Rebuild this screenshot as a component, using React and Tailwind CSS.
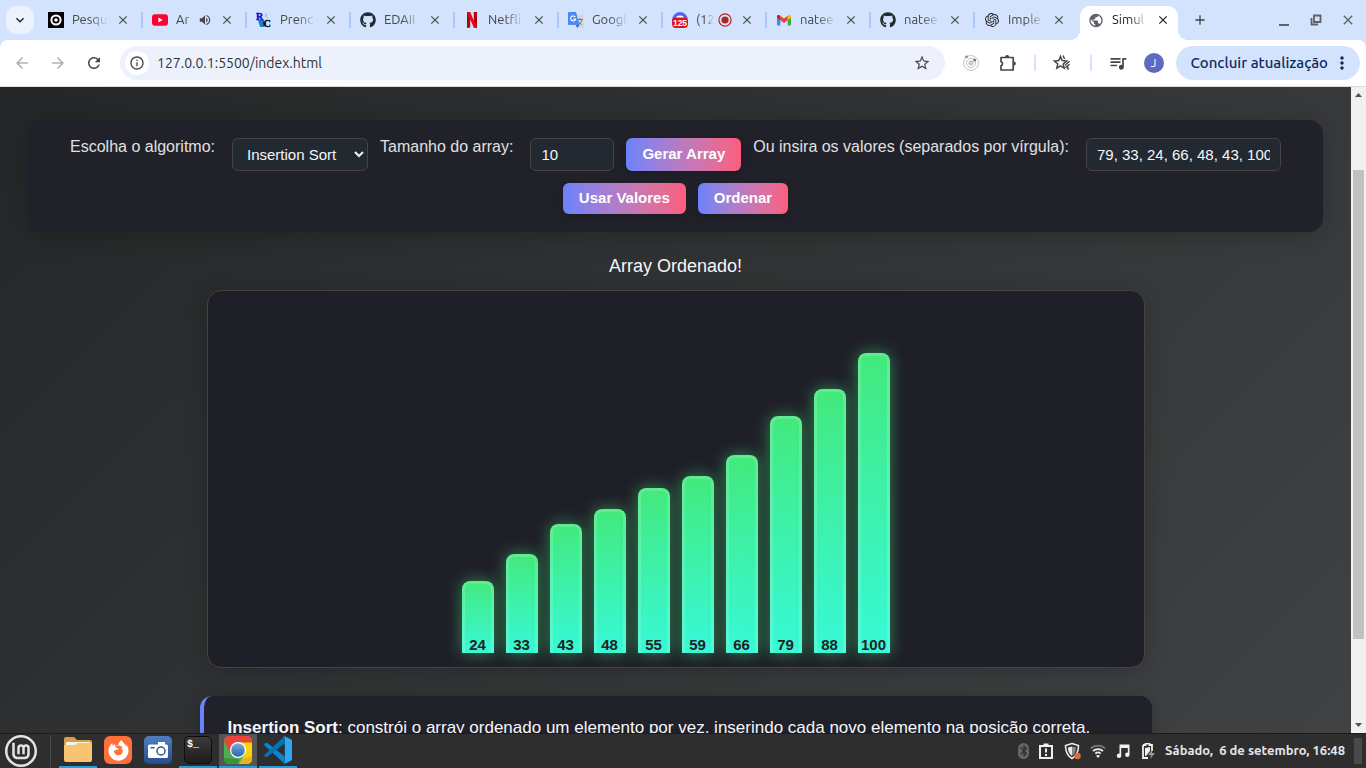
import { FaGithub, FaFirefoxBrowser } from "react-icons/fa";
import { SiLinuxmint, SiOpenai } from "react-icons/si";
import {
  MdArrowBack,
  MdArrowForward,
  MdBluetooth,
  MdClose,
  MdExpandMore,
  MdAdd,
  MdMoreVert,
  MdOutlineInfo,
  MdPublic,
  MdQueueMusic,
  MdRefresh,
  MdStarBorder,
  MdVolumeUp,
} from "react-icons/md";

/* ---------- favicons ---------- */

const SearchRing = () => (
  <svg viewBox="0 0 16 16" className="size-4">
    <rect width="16" height="16" fill="#000" />
    <circle cx="8" cy="8" r="4.6" fill="none" stroke="#fff" strokeWidth="2" />
    <circle cx="8" cy="8" r="1.8" fill="#fff" />
  </svg>
);

const YouTube = () => (
  <svg viewBox="0 0 16 16" className="size-4">
    <rect y="2.3" width="16" height="11.4" rx="3" fill="#ff0033" />
    <path d="M6.4 5.6v4.8L10.6 8z" fill="#fff" />
  </svg>
);

const LetterPair = () => (
  <svg viewBox="0 0 16 16" className="size-4">
    <path d="M2 8h6v7H4z" fill="#1b7fd0" />
    <path d="M9 1l3 2-2 1 3 3-4-2z" fill="#b9bcc4" />
    <path d="M7 9l3 3-2 3z" fill="#0d2c66" />
    <text x="0" y="7.5" fontSize="10" fontWeight="900" fill="#1010d8" stroke="#1010d8" strokeWidth=".5" fontFamily="Liberation Serif, serif">R</text>
    <text x="7.5" y="15" fontSize="10" fontWeight="900" fill="#111" stroke="#111" strokeWidth=".5" fontFamily="Liberation Serif, serif">C</text>
  </svg>
);

const Netflix = () => (
  <svg viewBox="0 0 16 16" className="size-4">
    <path d="M3 0h3.2v15.6L3 16zM9.8 0H13v16l-3.2-.4z" fill="#b1060f" />
    <path d="M3 0h3.2L13 16l-3.3-.4z" fill="#e50914" />
  </svg>
);

const Translate = () => (
  <svg viewBox="0 0 16 16" className="size-4">
    <path d="M6 3h9a1 1 0 0 1 1 1v11a1 1 0 0 1-1 1H9z" fill="#d5d8dc" />
    <path d="M9 7.5h6M12 6v1.5M14 7.5c-.5 2.4-2 4-4 5M10.5 9.5c.8 1.4 2 2.5 3.6 3" stroke="#6b7c8c" strokeWidth="1" fill="none" />
    <path d="M1 0h7l3.6 13H1a1 1 0 0 1-1-1V1a1 1 0 0 1 1-1z" fill="#4a8af4" />
    <path d="M8 13h3.6L9 16z" fill="#2f5fc4" />
    <path d="M7.3 5.1A2.5 2.5 0 1 0 7.6 7H5.3" stroke="#fff" strokeWidth="1.1" fill="none" />
  </svg>
);

const DiscordBadge = () => (
  <svg viewBox="0 0 16 16" className="size-4">
    <circle cx="8" cy="8" r="7.9" fill="#5865f2" />
    <path d="M4 6c0-1.500 1.500-2.500 4-2.500s4 1 4 2.500z" fill="#fff" />
    <rect y="5.600" width="16" height="10.400" rx="4" fill="#e01020" />
    <text x="8" y="14" textAnchor="middle" fontSize="8.500" fontWeight="700" fill="#fff" fontFamily="Liberation Sans, sans-serif">125</text>
  </svg>
);

const Gmail = () => (
  <svg viewBox="0 0 16 16" className="size-4">
    <path d="M1 4v8.500a1 1 0 0 0 1 1h2.300V6.500z" fill="#4285f4" />
    <path d="M15 4v8.500a1 1 0 0 1-1 1h-2.300V6.500z" fill="#34a853" />
    <path d="M11.700 4v4.200L15 5.700V4.300c0-1.600-1.500-2-2.500-1z" fill="#fbbc04" />
    <path d="M4.300 8.200V3.800L8 6.600l3.700-2.800v4.400L8 11z" fill="#ea4335" />
    <path d="M1 4.300v1.400l3.300 2.500V3.800l-.8-.6C2.500 2.500 1 3 1 4.300z" fill="#c5221f" />
  </svg>
);

const RecordDot = () => (
  <svg viewBox="0 0 14 14" className="size-3.5 shrink-0">
    <circle cx="7" cy="7" r="6.100" fill="none" stroke="#b3261e" strokeWidth="1.200" />
    <circle cx="7" cy="7" r="3.600" fill="#b3261e" />
  </svg>
);

/* ---------- toolbar icons ---------- */

const Orbit = () => (
  <svg viewBox="0 0 18 18" className="size-[18px]" fill="none" stroke="#c4c4c4">
    <circle cx="9" cy="9" r="7.500" />
    <circle cx="9" cy="9" r="4.600" />
    <circle cx="9" cy="9" r="2.200" fill="#d0d0d0" />
    <circle cx="4.500" cy="2.800" r="1.400" fill="#8a8a8a" stroke="none" />
    <circle cx="12.600" cy="6" r="1.500" fill="#777" stroke="none" />
  </svg>
);

const Puzzle = () => (
  <svg viewBox="0 0 20 20" className="size-5">
    <path
      d="M3 4.500h12.200V17H3v-4.200a2.200 2.200 0 0 0 0-4.200z"
      fill="none"
      stroke="#474747"
      strokeWidth="1.700"
      strokeLinejoin="round"
    />
    <path d="M7 4a2.100 2.100 0 0 1 4.200 0zM15.800 8.500a2.100 2.100 0 0 1 0 4.200z" fill="#474747" />
  </svg>
);

const StarTrail = () => (
  <svg viewBox="0 0 20 20" className="size-5" fill="none" stroke="#474747" strokeWidth="1.500">
    <path d="M8.500 3.500l1.700 4.100 4.400.4-3.400 2.900 1 4.300-3.700-2.300-3.700 2.300 1-4.300L2.400 8l4.400-.4z" />
    <path d="M11 2.500l1.600 3.500M13 12.200l4.500-3.900M13.400 14.800l4.100-3.600M15.300 13.200l1.100 3.600" />
  </svg>
);

/* ---------- desktop icons ---------- */

const Folder = () => (
  <svg viewBox="0 0 28 28" className="size-7">
    <path d="M0 3q0-2 2-2h8l3 3h13q2 0 2 2v6H0z" fill="#d99f43" />
    <rect x="2" y="6" width="24" height="6" fill="#f4f1ea" />
    <path d="M0 9h11l3-2h14v17q0 2-2 2H2q-2 0-2-2z" fill="#f8c471" />
  </svg>
);

const Firefox = () => (
  <span className="flex size-7 items-center justify-center rounded-md bg-[#ff7139]">
    <FaFirefoxBrowser className="size-[21px] text-white" />
  </span>
);

const Camera = () => (
  <svg viewBox="0 0 28 28" className="size-7">
    <defs>
      <linearGradient id="cam" x2="0" y2="1">
        <stop stopColor="#4f7fc0" />
        <stop offset="1" stopColor="#254c8c" />
      </linearGradient>
    </defs>
    <rect width="28" height="28" rx="5" fill="url(#cam)" />
    <path d="M14 6h7v3h-7z" fill="#fff" />
    <rect x="4" y="8.500" width="20" height="13.500" rx="1.500" fill="#fff" />
    <circle cx="17" cy="15" r="4" fill="#fff" stroke="#2f5797" strokeWidth="1.500" />
    <rect x="6.500" y="11" width="4" height="1.500" fill="#2f5797" />
  </svg>
);

const Terminal = () => (
  <svg viewBox="0 0 28 28" className="size-7">
    <defs>
      <linearGradient id="term" x2="0" y2="1">
        <stop stopColor="#3b3b3b" />
        <stop offset="1" stopColor="#1c1c1c" />
      </linearGradient>
    </defs>
    <rect x=".5" y=".5" width="27" height="27" rx="5" fill="url(#term)" stroke="#0c0c0c" />
    <text x="3" y="10.500" fontSize="10" fontWeight="700" fill="#fff" fontFamily="Liberation Mono, monospace">$_</text>
  </svg>
);

const Chrome = () => (
  <svg viewBox="0 0 28 28" className="size-7">
    <defs>
      <clipPath id="sq">
        <rect width="28" height="28" rx="5" />
      </clipPath>
      <linearGradient id="eye" x2="0" y2="1">
        <stop stopColor="#7bb0e0" />
        <stop offset="1" stopColor="#2a62a8" />
      </linearGradient>
    </defs>
    <g clipPath="url(#sq)">
      <rect width="28" height="28" fill="#4caf50" />
      <path d="M0 0h28v7H14L7 18 0 5z" fill="#e8453c" />
      <path d="M14 6.500h14V28H15l6-10z" fill="#fdd20a" />
      <path d="M28 20v8H15l3-5z" fill="#e3b51e" />
      <path d="M0 22l15 1-1 5H0z" fill="#3d9142" />
    </g>
    <circle cx="14" cy="14" r="8" fill="#fff" />
    <circle cx="14" cy="14" r="6.800" fill="url(#eye)" />
  </svg>
);

const VsCode = () => (
  <svg viewBox="0 0 28 28" className="size-7">
    <path d="M20.500 20.300L3.200 6.900q-.8-.6-1.500 0L.4 8.100q-.6.600 0 1.200L20.500 27.700z" fill="#0a86d1" />
    <path d="M20.500 7.700L3.200 21.100q-.8.600-1.500 0L.4 19.900q-.6-.6 0-1.200L20.500.3z" fill="#0671b8" />
    <path d="M20.500.3l6 2.700q1.500.6 1.500 2v18q0 1.400-1.500 2l-6 2.700q-.9.300-1.700-.4 1.700.9 2-1V1.700q-.3-1.900-2-1 .8-.7 1.700-.4z" fill="#2ca7f2" />
  </svg>
);

/* ---------- tray icons ---------- */

const Clipboard = () => (
  <svg viewBox="0 0 16 16" className="size-4" fill="none" stroke="#f0f0f0" strokeWidth="2">
    <path d="M2 3h12v12H2z" />
    <path d="M5.500 2h5" strokeWidth="3" />
    <path d="M8 5.500v4M8 11v2" />
  </svg>
);

const Shield = () => (
  <svg viewBox="0 0 18 18" className="size-[18px]">
    <path d="M9 1.500L15.500 3.500c0 6-1.500 10-6.500 13-5-3-6.500-7-6.500-13z" fill="none" stroke="#ececec" strokeWidth="1.600" />
    <path d="M9 4.500v9.500c-3-2-4-5-4-8.500z" fill="#ececec" />
    <path d="M9 4.500v9.500c3-2 4-5 4-8.500z" fill="#888" />
    <circle cx="14.500" cy="14" r="3.300" fill="#e36b35" />
  </svg>
);

const Wifi = () => (
  <svg viewBox="0 0 16 16" className="size-4" fill="none" strokeWidth="1.700">
    <path d="M.8 5.600a10.300 10.300 0 0 1 14.400 0" stroke="#777" />
    <path d="M3 8.200a7.200 7.200 0 0 1 10 0M5.300 10.700a4 4 0 0 1 5.400 0" stroke="#f0f0f0" />
    <path d="M8 15l-2-2.300q2-1.600 4 0z" fill="#f0f0f0" />
  </svg>
);

const Note = () => (
  <svg viewBox="0 0 16 16" className="size-4" fill="#f0f0f0">
    <path d="M4.500 1.500h10v10h-1.700V5H6.200v8.500H4.500z" />
    <circle cx="4" cy="12.800" r="2.200" />
    <circle cx="12.300" cy="11.800" r="2.200" />
  </svg>
);

const Battery = () => (
  <svg viewBox="0 0 16 16" className="size-4">
    <path d="M3 2h2.500V.5h4V2H12v6M8 15H3V2" fill="none" stroke="#f0f0f0" strokeWidth="1.800" />
    <path d="M5 5l5-1v4l-4 5H5z" fill="#f0f0f0" />
    <path d="M12 7l-4 5h3l-1 4 5-6h-3z" fill="#999" />
  </svg>
);

/* ---------- browser ---------- */

const TABS = [
  { title: "Pesqu", icon: <SearchRing /> },
  { title: "Ar", icon: <YouTube />, extra: <MdVolumeUp className="size-3.5 shrink-0" /> },
  { title: "Prenc", icon: <LetterPair /> },
  { title: "EDAII", icon: <FaGithub className="size-4 text-[#24292f]" /> },
  { title: "Netfli", icon: <Netflix /> },
  { title: "Googl", icon: <Translate /> },
  { title: "(12", icon: <DiscordBadge />, extra: <RecordDot /> },
  { title: "natee", icon: <Gmail /> },
  { title: "natee", icon: <FaGithub className="size-4 text-[#24292f]" /> },
  { title: "Imple", icon: <SiOpenai className="size-3.5 text-[#222]" />, last: true },
  { title: "Simul", icon: <MdPublic className="size-[17px] text-[#5f6368]" />, active: true },
];

function Tab({ title, icon, extra, active, last }) {
  return (
    <div
      className={
        "flex h-[34px] min-w-0 items-center pb-1.5 pl-2 " +
        (active ? "relative w-[98px] rounded-t-[10px] bg-white text-[#1f1f1f]" : "w-[104px] text-[#474747]")
      }
    >
      {active && (
        <>
          <span className="absolute bottom-0 -left-2.5 size-2.5 bg-[radial-gradient(circle_at_0_0,transparent_10px,white_10px)]" />
          <span className="absolute -right-2.5 bottom-0 size-2.5 bg-[radial-gradient(circle_at_100%_0,transparent_10px,white_10px)]" />
        </>
      )}
      <span className="flex size-4 shrink-0 items-center justify-center">{icon}</span>
      <span className="ml-2 flex w-9 shrink-0 items-center gap-1">
        <span className="min-w-0 grow text-[13px] whitespace-nowrap [mask-image:linear-gradient(to_right,black_50%,transparent)]">
          {title}
        </span>
        {extra}
      </span>
      <button aria-label="Fechar guia" className="ml-[7px] flex size-4 shrink-0 items-center justify-center">
        <MdClose className="size-3.5" />
      </button>
      {!active && !last && <span className="mr-px ml-auto h-4 w-0.5 bg-[#a8c7fa]" />}
    </div>
  );
}

function TabStrip() {
  return (
    <div className="flex h-10 shrink-0 items-end bg-[#d3e3fd] pl-1.5">
      <button aria-label="Pesquisar guias" className="mb-1.5 flex size-7 items-center justify-center rounded-[10px] bg-[#ecf2fe]">
        <MdExpandMore className="size-4 text-[#1f1f1f]" />
      </button>
      <div className="ml-1.5 flex min-w-0">
        {TABS.map((t, i) => (
          <Tab key={i} {...t} />
        ))}
      </div>
      <button aria-label="Nova guia" className="mb-2.5 ml-3 flex size-5 items-center justify-center text-[#474747]">
        <MdAdd className="size-4" />
      </button>
      <div className="mr-2.5 mb-3 ml-auto flex gap-4 text-[#5f6368]">
        <button aria-label="Minimizar" className="flex size-4 items-end justify-center pb-0.5">
          <span className="h-0.5 w-2.5 bg-current" />
        </button>
        <button aria-label="Restaurar" className="flex size-4 items-center justify-center">
          <svg viewBox="0 0 12 12" className="size-3" fill="none" stroke="currentColor" strokeWidth="1.800">
            <path d="M4 1.500h6.500V8H4zM1.500 4v6.500H8" />
          </svg>
        </button>
        <button aria-label="Fechar" className="flex size-4 items-center justify-center">
          <MdClose className="size-4" />
        </button>
      </div>
    </div>
  );
}

function Toolbar() {
  return (
    <div className="bg-[#d3e3fd]">
      <div className="flex h-[47px] items-center rounded-t-lg border-b border-[#dcdcdc] bg-white pr-1.5 pl-3 text-[#474747]">
        <button aria-label="Voltar" className="flex size-5 items-center justify-center text-[#b0b0b0]">
          <MdArrowBack className="size-[18px]" />
        </button>
        <button aria-label="Avançar" className="ml-4 flex size-5 items-center justify-center text-[#b0b0b0]">
          <MdArrowForward className="size-[18px]" />
        </button>
        <button aria-label="Atualizar" className="ml-4 flex size-5 items-center justify-center">
          <MdRefresh className="size-[18px]" />
        </button>
        <div className="ml-4 flex h-[34px] min-w-0 grow items-center rounded-full bg-[#ecf1fb] pr-3.5 pl-[5px]">
          <button aria-label="Informações do site" className="flex size-6 shrink-0 items-center justify-center rounded-full bg-white">
            <MdOutlineInfo className="size-4" />
          </button>
          <input
            aria-label="Endereço"
            defaultValue="127.0.0.1:5500/index.html"
            className="ml-2 min-w-0 grow bg-transparent text-sm text-[#303134] outline-none"
          />
          <button aria-label="Favoritar">
            <MdStarBorder className="size-[18px]" />
          </button>
        </div>
        <button aria-label="Extensão Orbit" className="ml-[17px]">
          <Orbit />
        </button>
        <button aria-label="Extensões" className="ml-[18px]">
          <Puzzle />
        </button>
        <span className="ml-4 h-4 w-0.5 bg-[#d3e3fd]" />
        <button aria-label="Favoritos" className="ml-4">
          <StarTrail />
        </button>
        <span className="ml-[18px] h-4 w-0.5 bg-[#d3e3fd]" />
        <button aria-label="Controle de mídia" className="ml-4">
          <MdQueueMusic className="size-5" />
        </button>
        <button aria-label="Perfil" className="ml-4 flex size-5 items-center justify-center rounded-full bg-[#5c6bc0] text-xs text-white">
          J
        </button>
        <button className="ml-3 flex h-[34px] items-center rounded-full bg-[#d3e3fd] pr-2 pl-[15px] text-[15px] font-medium whitespace-nowrap text-[#0b2a5c]">
          Concluir atualização
          <MdMoreVert className="ml-1 size-5" />
        </button>
      </div>
    </div>
  );
}

/* ---------- page ---------- */

const VALUES = [24, 33, 43, 48, 55, 59, 66, 79, 88, 100];

const FIELD = "h-[33px] rounded-md border border-[#444] bg-[#232930] text-[15px] text-[#f5f6fa] outline-none";
const LABEL = "mr-[5px] leading-[18px] text-[#e0e0e0]";
const BUTTON =
  "rounded-md bg-linear-to-r from-[#6a82fb] to-[#fc5c7d] px-4 text-[15px] font-bold text-white shadow-[0_2px_8px_rgba(0,0,0,0.2)]";

function Controls() {
  return (
    <form
      onSubmit={(e) => e.preventDefault()}
      className="mx-7 flex flex-wrap items-start justify-center gap-3 rounded-[14px] bg-[#21212a] py-[18px] shadow-[0_4px_24px_rgba(0,0,0,0.2)]"
    >
      <label htmlFor="algorithm" className={LABEL}>Escolha o algoritmo:</label>
      <select id="algorithm" defaultValue="insertion" className={FIELD + " w-[136px] px-2.5"}>
        <option value="bubble">Bubble Sort</option>
        <option value="insertion">Insertion Sort</option>
        <option value="selection">Selection Sort</option>
      </select>
      <label htmlFor="size" className={LABEL}>Tamanho do array:</label>
      <input id="size" type="number" defaultValue="10" className={FIELD + " w-[84px] px-2.5"} />
      <button className={BUTTON + " h-[33px]"}>Gerar Array</button>
      <label htmlFor="values" className={LABEL}>Ou insira os valores (separados por vírgula):</label>
      <input
        id="values"
        type="text"
        defaultValue="79, 33, 24, 66, 48, 43, 100, 55, 59, 88"
        className={FIELD + " w-[195px] px-2.5"}
      />
      <button className={BUTTON + " h-[31px]"}>Usar Valores</button>
      <button className={BUTTON + " h-[31px]"}>Ordenar</button>
    </form>
  );
}

function Chart() {
  return (
    <div className="mx-auto flex h-[378px] w-full max-w-[938px] items-end justify-center gap-3 rounded-[14px] border border-[#444] bg-[#1f1f28] pb-3.5 shadow-[0_4px_24px_rgba(0,0,0,0.2)]">
      {VALUES.map((v) => (
        <div
          key={v}
          style={{ height: v * 3 }}
          className="flex w-8 items-end justify-center rounded-t-lg border-[3px] border-b-0 border-white/15 bg-linear-to-b from-[#43e97b] to-[#38f9d7] bg-origin-border text-[15px] leading-[17px] font-bold text-[#222] shadow-[0_0_16px_rgba(67,233,123,0.5)]"
        >
          {v}
        </div>
      ))}
    </div>
  );
}

function Scrollbar() {
  return (
    <div className="flex w-[15px] shrink-0 flex-col items-center bg-[#f1f1f1]">
      <svg viewBox="0 0 15 17" className="h-[17px] w-[15px] shrink-0">
        <path d="M4 10h7L7.500 6z" fill="#505050" />
      </svg>
      <div className="grow-[66]" />
      <div className="w-[11px] grow-[469] bg-[#c1c1c1]" />
      <div className="grow-[77]" />
      <svg viewBox="0 0 15 17" className="h-[17px] w-[15px] shrink-0">
        <path d="M4 7h7l-3.500 4z" fill="#505050" />
      </svg>
    </div>
  );
}

function Page() {
  return (
    <div className="flex min-h-0 grow">
      <main className="min-w-0 grow overflow-hidden bg-linear-135 from-[#242627] to-[#404244] pt-[33px] font-['Liberation_Sans',Arial,sans-serif] text-base text-[#f5f6fa]">
        <Controls />
        <p className="mt-6 mb-3.5 text-center text-lg leading-5">Array Ordenado!</p>
        <Chart />
        <p className="mx-auto mt-7 w-full max-w-[952px] rounded-xl border-l-4 border-[#6a82fb] bg-[#21212a] px-6 py-[18px] text-[17px] leading-[27px] shadow-[0_2px_16px_rgba(0,0,0,0.2)]">
          <strong>Insertion Sort</strong>: constrói o array ordenado um elemento por vez, inserindo cada novo elemento na
          posição correta.
        </p>
      </main>
      <Scrollbar />
    </div>
  );
}

/* ---------- desktop panel ---------- */

const APPS = [
  { name: "Arquivos", icon: <Folder />, open: true },
  { name: "Firefox", icon: <Firefox /> },
  { name: "Captura de tela", icon: <Camera /> },
  { name: "Terminal", icon: <Terminal />, open: true },
  { name: "Chrome", icon: <Chrome />, open: true, focused: true },
  { name: "VS Code", icon: <VsCode />, open: true },
];

function Panel() {
  return (
    <footer className="flex h-[35px] shrink-0 items-center border-t border-[#1c1c1c] bg-[#2e2e2e] pl-[5px]">
      <button aria-label="Menu">
        <SiLinuxmint className="size-8 text-[#e4e4e4]" />
      </button>
      <span className="ml-[13px] h-8 w-px bg-[#4a4a4a]" />
      <div className="ml-2 flex h-full gap-0.5">
        {APPS.map((a) => (
          <button
            key={a.name}
            aria-label={a.name}
            className={
              "flex w-[38px] items-start justify-center border-b-2 pt-0.5 " +
              (a.open ? "border-[#1f9ede] " : "border-transparent ") +
              (a.focused ? "bg-[#555]" : "")
            }
          >
            {a.icon}
          </button>
        ))}
      </div>
      <div className="mr-1 ml-auto flex items-center gap-[9px]">
        <span className="flex h-4 w-[11px] items-center justify-center rounded-full bg-[#666]">
          <MdBluetooth className="size-3.5 shrink-0 text-[#2e2e2e]" />
        </span>
        <Clipboard />
        <Shield />
        <Wifi />
        <Note />
        <Battery />
        <time className="text-[13px] font-bold whitespace-pre text-[#e4e4e4]">Sábado,  6 de setembro, 16:48</time>
        <span className="h-[26px] w-2 bg-[#4a4a4a]" />
      </div>
    </footer>
  );
}

export default function App() {
  return (
    <div className="flex h-screen flex-col overflow-hidden font-[Ubuntu,'Noto_Sans',sans-serif]">
      <TabStrip />
      <Toolbar />
      <Page />
      <Panel />
    </div>
  );
}
